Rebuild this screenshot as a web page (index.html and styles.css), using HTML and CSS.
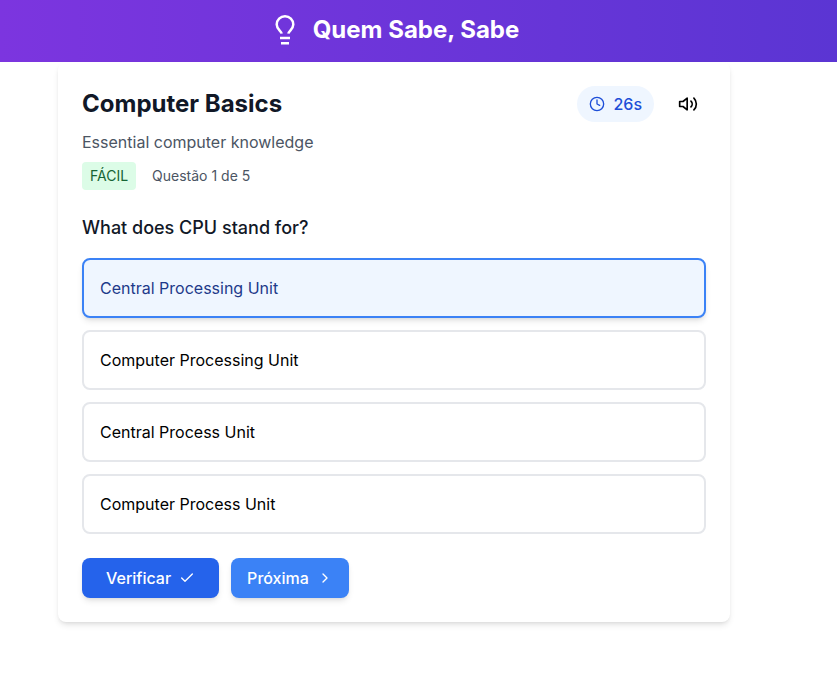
FILE: index.html
```html
<!DOCTYPE html>
<html lang="pt">
<head>
<meta charset="utf-8">
<title>Quem Sabe, Sabe</title>
<link rel="stylesheet" href="styles.css">
</head>
<body>
<header class="topbar">
  <svg class="bulb" viewBox="0 0 32 32" width="32" height="32"><path d="M12.600 19.700C12.200 16.600 7.700 15.300 7.700 10.600a8.300 8.300 0 0 1 16.600 0c0 4.700-4.500 6-4.900 9.100"/><path d="M11 24h10M12 29.300h8"/></svg>
  <h1>Quem Sabe, Sabe</h1>
</header>
<main class="card">
  <div class="card-head">
    <h2>Computer Basics</h2>
    <div class="tools">
      <span class="timer"><svg viewBox="0 0 24 24" width="16" height="16"><circle cx="12" cy="12" r="10"/><path d="M12 6v6l4 2"/></svg>26s</span>
      <button class="sound" aria-label="Som"><svg viewBox="0 0 24 24" width="20" height="20"><path d="M11 5 6 9H2v6h4l5 4zM15.540 8.460a5 5 0 0 1 0 7.070M19.070 4.930a10 10 0 0 1 0 14.140"/></svg></button>
    </div>
  </div>
  <p class="desc">Essential computer knowledge</p>
  <div class="meta"><span class="level">FÁCIL</span><span>Questão 1 de 5</span></div>
  <h3>What does CPU stand for?</h3>
  <div class="options">
    <button class="option selected">Central Processing Unit</button>
    <button class="option">Computer Processing Unit</button>
    <button class="option">Central Process Unit</button>
    <button class="option">Computer Process Unit</button>
  </div>
  <div class="actions">
    <button class="btn check">Verificar<svg viewBox="0 0 24 24" width="16" height="16"><path d="M20 6 9 17l-5-5"/></svg></button>
    <button class="btn next">Próxima<svg viewBox="0 0 24 24" width="16" height="16"><path d="m9 18 6-6-6-6"/></svg></button>
  </div>
</main>
</body>
</html>
```
FILE: styles.css
```css
* { box-sizing: border-box; margin: 0; }
body { min-height: 100vh; background: #fff; font: 16px/24px Inter, sans-serif; color: #000; }
button { font: inherit; color: inherit; background: none; border: 0; padding: 0; }
svg { display: block; fill: none; stroke: currentColor; stroke-width: 2; stroke-linecap: round; stroke-linejoin: round; }
.topbar { height: 62px; padding: 0 49px 2px 0; display: flex; align-items: center; justify-content: center; gap: 12px; color: #fff; background: linear-gradient(90deg, #7c35df, #5b35d3); }
.bulb { stroke-width: 2.500; stroke-linecap: butt; }
h1 { font-size: 24px; line-height: 32px; font-weight: 700; }
.card { width: 672px; height: 560px; margin-left: 58px; padding: 24px; border-radius: 8px; background: #fff; box-shadow: 0 4px 6px -1px rgb(0 0 0 / .1), 0 2px 4px -2px rgb(0 0 0 / .1); }
.card-head { display: flex; justify-content: space-between; align-items: center; height: 36px; }
h2 { font-size: 24px; line-height: 32px; font-weight: 700; color: #111827; }
.tools { display: flex; align-items: center; gap: 16px; }
.timer { display: flex; align-items: center; gap: 8px; height: 36px; padding: 0 12px; border-radius: 18px; color: #1d4ed8; background: #eff6ff; font-weight: 500; }
.sound { padding: 8px; }
.desc { margin-top: 8px; color: #4b5563; }
.meta { display: flex; align-items: center; gap: 16px; margin-top: 8px; font-size: 14px; line-height: 20px; color: #4b5563; }
.level { padding: 4px 8px; border-radius: 4px; background: #dcfce7; color: #166534; }
h3 { margin: 24px 0 16px; font-size: 18px; line-height: 28px; font-weight: 500; color: #111827; }
.options { display: grid; gap: 12px; }
.option { height: 60px; padding: 0 16px; border: 2px solid #e5e7eb; border-radius: 8px; text-align: left; }
.selected { border-color: #3b82f6; background: #eff6ff; color: #1e3a8a; box-shadow: 0 4px 6px -1px rgb(0 0 0 / .1), 0 2px 4px -2px rgb(0 0 0 / .1); }
.actions { display: flex; gap: 12px; margin-top: 24px; }
.btn { display: flex; align-items: center; gap: 8px; height: 40px; border-radius: 8px; color: #fff; font-weight: 500; box-shadow: 0 4px 6px -1px rgb(0 0 0 / .1), 0 2px 4px -2px rgb(0 0 0 / .1); }
.check { padding: 0 24px; background: #2563eb; }
.next { padding: 0 16px; background: #3b82f6; }
```
